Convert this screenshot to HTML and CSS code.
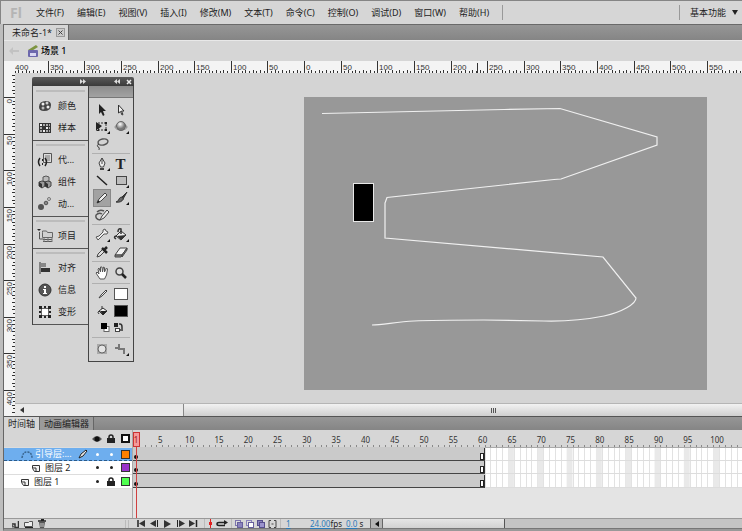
FILE: index.html
```
<!DOCTYPE html>
<html lang="zh-CN">
<head>
  <meta charset="UTF-8" />
  <meta name="viewport" content="width=device-width, initial-scale=1" />
  <title>未命名-1</title>
  <link rel="stylesheet" href="styles.css">
</head>
<body>

  <!-- Menu bar -->
  <header class="menubar">
    <span class="logo">Fl</span>
    <nav class="menus">
      <button>文件(F)</button>
      <button>编辑(E)</button>
      <button>视图(V)</button>
      <button>插入(I)</button>
      <button>修改(M)</button>
      <button>文本(T)</button>
      <button>命令(C)</button>
      <button>控制(O)</button>
      <button>调试(D)</button>
      <button>窗口(W)</button>
      <button>帮助(H)</button>
    </nav>
    <button class="layout-switch">基本功能
      <svg width="6" height="5"><path d="M0 0h6L3 5z" fill="#222"/></svg>
    </button>
  </header>

  <div class="app">
    <!-- Document tabs -->
    <div class="doc-tabs">
      <div class="doc-tab">未命名-1*
        <button class="close" aria-label="关闭"><svg width="9" height="9"><rect x=".5" y=".5" width="8" height="8" fill="#ccc" stroke="#999"/><path d="M2.5 2.5l4 4M6.5 2.5l-4 4" stroke="#444"/></svg></button>
      </div>
    </div>

    <div class="scene-bar">
      <svg class="back" width="10" height="8"><path d="M0 4l4-4v3h6v2H4v3z" fill="#c2c2c2"/></svg>
      <svg width="12" height="13"><path d="M1 5l8-5 2 2-8 5z" fill="#7d9440"/><rect x="1" y="5" width="10" height="7" rx="1" fill="#6d68ad"/><rect x="3" y="8" width="6" height="3" fill="#d9d7f2"/></svg>
      <span>场景 1</span>
    </div>

    <!-- Pasteboard with rulers -->
    <main class="workspace">
      <div class="corner"></div>
      <svg class="ruler ruler-h" id="rulerH"></svg>
      <svg class="ruler ruler-v" id="rulerV"></svg>
      <div class="pasteboard">
        <svg class="stage" width="403" height="293">
          <rect width="403" height="293" fill="#989898"/>
          <path d="M18 16.5L200 12.5 256 11.5 353 40v8L257 82 250 82.5 83 100.5 81 106v35L299 160l33 41c0 6-14 14-32 18-20 4-40 5.5-60 5l-60-1c-30 0-52 0-70 1-18 1-32 4-42 4" fill="none" stroke="#f0f0f0" stroke-width="1.2"/>
          <rect x="49.5" y="86.5" width="20" height="38" fill="#000" stroke="#e8e8e8"/>
        </svg>
      </div>
      <div class="scroll-h">
        <svg width="4" height="6"><path d="M4 0v6L0 3z" fill="#333"/></svg>
        <div class="thumb"><i></i><i></i><i></i></div>
      </div>
    </main>

    <!-- Timeline -->
    <section class="timeline">
      <div class="panel-tabs">
        <button class="active">时间轴</button>
        <button>动画编辑器</button>
      </div>
      <div class="timeline-body">
        <div class="layers">
          <div class="layer layer-head">
            <span></span>
            <svg width="10" height="8"><path d="M0 4q5-6 10 0-5 6-10 0z" fill="#555"/><circle cx="5" cy="4" r="2.5" fill="#111"/></svg>
            <svg width="8" height="9"><path d="M2 5V3q0-2 2-2t2 2v2" fill="none" stroke="#222" stroke-width="1.5"/><rect y="4" width="8" height="5" fill="#222"/></svg>
            <svg width="9" height="9"><rect x="1" y="1" width="7" height="7" fill="#fff" stroke="#111" stroke-width="2"/></svg>
          </div>
          <div class="layer selected">
            <span class="name"><svg width="12" height="9"><path d="M1 8q1-7 6-6 4 1 4 6" fill="none" stroke="#3a6690" stroke-width="1.5" stroke-dasharray="2 1"/></svg>引导层:...<svg class="pen" width="10" height="10"><path d="M1 9l2-4 5-4 1 1-4 5z" fill="#eee" stroke="#222"/></svg></span>
            <b></b><b></b><i class="orange"></i>
          </div>
          <div class="layer">
            <span class="name child"><svg width="8" height="8"><path d="M.5 1.5v3l2 3h5v-6z" fill="#f4f4f4" stroke="#333"/><path d="M1 4h3v3" fill="none" stroke="#333"/></svg>图层 2</span>
            <b></b><b></b><i class="purple"></i>
          </div>
          <div class="layer">
            <span class="name"><svg width="8" height="8"><path d="M.5 1.5v3l2 3h5v-6z" fill="#f4f4f4" stroke="#333"/><path d="M1 4h3v3" fill="none" stroke="#333"/></svg>图层 1</span>
            <b></b>
            <svg width="8" height="9"><path d="M2 5V3q0-2 2-2t2 2v2" fill="none" stroke="#222" stroke-width="1.5"/><rect y="4" width="8" height="5" fill="#222"/></svg>
            <i class="green"></i>
          </div>
        </div>
        <svg class="frames" id="frames"></svg>
      </div>

      <div class="timeline-foot">
        <div class="layer-tools">
          <button aria-label="新建图层"><svg width="8" height="8"><path d="M1 4h3v3.5h3.5V1" fill="none" stroke="#333" stroke-width="1.5"/><path d="M1 4l3 3.5H1z" fill="#555"/></svg></button>
          <button aria-label="新建文件夹"><svg width="9" height="8"><path d="M.5 6.5v-4h4l1-1h3v5z" fill="#eee" stroke="#555"/><path d="M1 7.5h8" stroke="#222"/></svg></button>
          <button aria-label="删除"><svg width="8" height="9"><path d="M0 2h8M3 .5h3" stroke="#222" stroke-width="1.5"/><path d="M1 3h6l-1 6H2z" fill="#555"/><path d="M3 4v4M5 4v4" stroke="#ccc"/></svg></button>
          <em></em>
        </div>
        <div class="play-tools">
          <button aria-label="转到第一帧"><svg width="9" height="7"><path d="M1 0v7" stroke="#222" stroke-width="1.5"/><path d="M8 0v7L2 3.5z" fill="#333"/></svg></button>
          <button aria-label="后退一帧"><svg width="9" height="7"><path d="M6 0v7L0 3.5z" fill="#333"/><path d="M7.5 0v7" stroke="#222"/></svg></button>
          <button aria-label="播放"><svg width="9" height="8"><path d="M1 0v8l7-4z" fill="#333"/></svg></button>
          <button aria-label="前进一帧"><svg width="9" height="7"><path d="M1.5 0v7" stroke="#222"/><path d="M3 0v7l6-3.5z" fill="#333"/></svg></button>
          <button aria-label="转到最后一帧"><svg width="9" height="7"><path d="M0 0v7l6-3.5z" fill="#333"/><path d="M7.5 0v7" stroke="#222" stroke-width="1.5"/></svg></button>
        </div>
        <div class="onion-tools">
          <button aria-label="帧居中"><svg width="5" height="9"><path d="M2.5 0v9" stroke="#e02020"/><path d="M1 3h3v3H1z" fill="#e02020"/></svg></button>
          <button aria-label="循环"><svg width="12" height="8"><path d="M9 5.5H3q-2 0-2-1.5t2-1.5h6" fill="none" stroke="#222" stroke-width="1.5"/><path d="M8 0l4 2.5L8 5z" fill="#222"/></svg></button>
        </div>
        <div class="onion-tools">
          <button aria-label="绘图纸外观"><svg width="8" height="8"><rect x=".5" y=".5" width="5" height="5" fill="#ddd" stroke="#7b74ad"/><rect x="2.5" y="2.5" width="5" height="5" fill="#8a83bd" stroke="#665f9c"/></svg></button>
          <button aria-label="绘图纸外观轮廓"><svg width="8" height="8"><rect x=".5" y=".5" width="5" height="5" fill="#ddd" stroke="#8a83bd"/><rect x="2.5" y="2.5" width="5" height="5" fill="#fff" stroke="#665f9c"/></svg></button>
          <button aria-label="编辑多个帧"><svg width="8" height="8"><rect x=".5" y=".5" width="5" height="5" fill="#8a83bd" stroke="#554e8c"/><rect x="2.5" y="2.5" width="5" height="5" fill="#9a93cd" stroke="#554e8c"/></svg></button>
          <button aria-label="修改标记"><svg width="9" height="8"><path d="M3 .5H1v7h2M6 .5h2v7H6" fill="none" stroke="#444"/><path d="M3.5 3.5h2v1h-2z" fill="#444"/></svg></button>
        </div>
        <div class="stats">
          <a href="#">1</a>
          <span><a href="#">24.00</a>fps</span>
          <span><a href="#">0.0</a> s</span>
        </div>
        <div class="frame-scroll">
          <button aria-label="向左"><svg width="4" height="6"><path d="M4 0v6L0 3z" fill="#111"/></svg></button>
          <div class="thumb"></div>
        </div>
      </div>
    </section>
  </div>

  <!-- Floating panels -->
  <div class="palettes">
    <div class="palette-bar">
      <svg width="6" height="5"><path d="M0 0l3 2.5L0 5zM3 0l3 2.5L3 5z" fill="#ddd"/></svg>
      <svg width="6" height="5"><path d="M3 0v5L0 2.5zM6 0v5L3 2.5z" fill="#ddd"/></svg>
      <svg width="6" height="6"><path d="M1 1l4 4M5 1L1 5" stroke="#eee" stroke-width="1.5"/></svg>
    </div>
    <div class="palette-row">
      <div class="icon-panels">
        <div class="group">
          <button><svg width="14" height="14"><path d="M1 8q0-6 7-6 5 0 5 4 0 6-7 6-5 0-5-4z" fill="#444"/><circle cx="5" cy="5" r="1.5" fill="#eee"/><circle cx="9" cy="4" r="1.5" fill="#ccc"/><circle cx="10" cy="8" r="1.5" fill="#eee"/><circle cx="5" cy="9" r="1.5" fill="#bbb"/></svg>颜色</button>
          <button><svg width="14" height="14"><path d="M1 2h12v10H1z" fill="#333"/><path d="M2 3h2v2H2zM8 6h2v2H8zM5 9h2v2H5z" fill="#eee"/><path d="M5 3h2v2H5zM8 3h2v2H8zM11 3h1v2h-1zM2 6h2v2H2zM11 6h1v2h-1zM2 9h2v2H2zM8 9h2v2H8zM11 9h1v2h-1z" fill="#aaa"/></svg>样本</button>
        </div>
        <div class="group">
          <button><svg width="14" height="14"><path d="M5.5.5h8v9h-8z" fill="#ddd" stroke="#555"/><path d="M7 3h5M7 5h5M7 7h5" stroke="#777"/><path d="M2 5Q-1 9 2 13M7 5q3 4 0 8" fill="none" stroke="#222" stroke-width="1.5"/><path d="M4.5 6v2M4.5 10v2" stroke="#222"/></svg>代...</button>
          <button><svg width="14" height="14"><path d="M5 2l3-1 3 1v4L8 7 5 6z" fill="#bbb" stroke="#555"/><path d="M1 7l3-1 3 1v4l-3 2-3-2zM7 7l3-1 3 1v4l-3 2-3-2z" fill="#999" stroke="#444"/><path d="M1 7l3 2v4l-3-2zM7 7l3 2v4l-3-2z" fill="#333"/></svg>组件</button>
          <button><svg width="14" height="14"><circle cx="3" cy="10" r="3" fill="#555"/><circle cx="8" cy="6" r="1.8" fill="#888" stroke="#555"/><circle cx="11" cy="2" r="1.5" fill="#ccc" stroke="#777"/></svg>动...</button>
        </div>
        <div class="group">
          <button><svg width="16" height="14"><path d="M-1 0h4L1 2z" fill="#222"/><path d="M4.5 3.5V2h4l1 1.5h5v5h-10z" fill="#d0d0d0" stroke="#666"/><path d="M1.5 3v7H5M5 10.5h9M5 12.5h9" fill="none" stroke="#555"/><path d="M6 9v4M10 9v4M14 9v4" stroke="#777"/></svg>项目</button>
        </div>
        <div class="group">
          <button><svg width="14" height="14"><path d="M2 1v12" stroke="#333"/><path d="M3 2h5v4H3z" fill="#888"/><path d="M3 7h9v4H3z" fill="#333"/></svg>对齐</button>
          <button><svg width="14" height="14"><circle cx="7" cy="7" r="6" fill="#555" stroke="#333"/><path d="M6 3h2v2H6zM5 6h3v4h1v1H5v-1h1V7H5z" fill="#fff"/></svg>信息</button>
          <button><svg width="14" height="14"><rect x="3.5" y="3.5" width="7" height="7" fill="#fff" stroke="#666"/><path d="M1 1h3v3H1zM6 1h2v2H6zM10 1h3v3h-3zM1 6h2v2H1zM11 6h2v2h-2zM1 10h3v3H1zM6 11h2v2H6zM10 10h3v3h-3z" fill="#222"/></svg>变形</button>
        </div>
      </div>

      <div class="tools">
        <div class="tools-head"></div>
        <div class="group">
          <button aria-label="选择"><svg width="16" height="16"><path d="M5 2v10l2-2 2 4 1.5-1L9 9h3z" fill="#222"/></svg></button>
          <button aria-label="部分选取"><svg width="16" height="16"><path d="M5.5 3v8l2-1.5L9 13l1-.5L8.5 9H11z" fill="#f2f2f2" stroke="#333"/></svg></button>
          <button aria-label="任意变形"><svg width="16" height="16"><rect x="4" y="4" width="8" height="7" fill="none" stroke="#333" stroke-dasharray="2 1"/><path d="M2 3v9l6-5zM11 3h2v2h-2zM11 10h2v2h-2zM3 10h2v2H3z" fill="#222"/><path d="M16 12v3h-3z" fill="#111"/></svg></button>
          <button aria-label="3D旋转"><svg width="16" height="16"><ellipse cx="8" cy="8" rx="6" ry="3" fill="none" stroke="#888"/><circle cx="8" cy="7" r="4.5" fill="url(#ball)" stroke="#666"/><path d="M16 12v3h-3z" fill="#111"/></svg></button>
          <button aria-label="套索"><svg width="16" height="16"><ellipse cx="9" cy="6" rx="5" ry="3" fill="none" stroke="#555" stroke-width="1.5" transform="rotate(-12 9 6)"/><path d="M5 8q-3 1-1 3 2 0 1 3" fill="none" stroke="#444"/></svg></button>
        </div>
        <div class="group">
          <button aria-label="钢笔"><svg width="16" height="16"><path d="M8 2l3 5-1.5 4h-3L5 7z" fill="#eee" stroke="#444"/><path d="M8 2v6" stroke="#444"/><path d="M6 12h4v2H6z" fill="#444"/><path d="M16 12v3h-3z" fill="#111"/></svg></button>
          <button aria-label="文本" class="type">T</button>
          <button aria-label="线条"><svg width="16" height="16"><path d="M3 3l10 9" stroke="#222" stroke-width="1.5"/></svg></button>
          <button aria-label="矩形"><svg width="16" height="16"><rect x="3.5" y="3.5" width="10" height="8" fill="#bdbdbd" stroke="#444"/><path d="M16 12v3h-3z" fill="#111"/></svg></button>
          <button aria-label="铅笔" class="on"><svg width="16" height="16"><path d="M3 13l2-4 6-6 2 2-6 6z" fill="#eee" stroke="#444"/><path d="M3 13l3-1-2-2z" fill="#222"/></svg></button>
          <button aria-label="刷子"><svg width="16" height="16"><path d="M14 2L9 7l1 2z" fill="#333" stroke="#333"/><path d="M9 7l1.5 2Q8 13 3 12q3-1 3-3 1-2 3-2z" fill="#666" stroke="#333"/><path d="M16 12v3h-3z" fill="#111"/></svg></button>
          <button aria-label="Deco"><svg width="16" height="16"><path d="M6 13l2-4 5-6 2 2-5 6z" fill="#eee" stroke="#444"/><path d="M3 5q3-3 7-1M2 8q3-3 6-1M6 13Q1 12 2 8" fill="none" stroke="#555" stroke-width="1.5"/></svg></button>
        </div>
        <div class="group">
          <button aria-label="骨骼"><svg width="16" height="16"><path d="M4 13l-2-3 3-1 4-4 0-2 2-1 1 2 2 1-1 2-3 0-4 4z" fill="#eee" stroke="#555"/><path d="M16 12v3h-3z" fill="#111"/></svg></button>
          <button aria-label="颜料桶"><svg width="16" height="16"><path d="M3 9l5-5 5 4-5 5z" fill="#eee" stroke="#333"/><path d="M8 7V2q-3-1-3 3M3 9Q0 10 3 12" fill="none" stroke="#333" stroke-width="1.5"/><path d="M4 9l9-1-5 5z" fill="#333"/><path d="M16 12v3h-3z" fill="#111"/></svg></button>
          <button aria-label="滴管"><svg width="16" height="16"><path d="M3 13l1-3 5-5 2 2-5 5z" fill="#ddd" stroke="#444"/><path d="M8 4l5 5M10 6l3-3" stroke="#222" stroke-width="2.5"/></svg></button>
          <button aria-label="橡皮擦"><svg width="16" height="16"><path d="M2 11l5-7h7l-5 7z" fill="#f2f2f2" stroke="#444"/><path d="M2 11h7l-1 2H2zM9 11l5-7v2l-5 7z" fill="#888" stroke="#444"/></svg></button>
        </div>
        <div class="group roomy">
          <button aria-label="手形"><svg width="16" height="16"><path d="M6 14L2 8l1-1 2 2-1-5 1-1 1.5 4V2H8l.5 5 1-5 1 .5V7l2-4 1 1-1 6-2 4z" fill="#fff" stroke="#555"/></svg></button>
          <button aria-label="缩放"><svg width="16" height="16"><circle cx="6.5" cy="6.5" r="3.5" fill="#ddd" stroke="#444" stroke-width="1.5"/><path d="M9 9l4 4" stroke="#222" stroke-width="2.5"/></svg></button>
        </div>
        <div class="group colors">
          <svg width="16" height="16"><path d="M5 12l2-3 5-5 1 1-5 5z" fill="#eee" stroke="#444"/></svg>
          <button aria-label="笔触颜色" class="swatch white"></button>
          <svg width="16" height="16"><path d="M5 8l4-3 4 3-4 4z" fill="#eee" stroke="#333"/><path d="M6 8l7 0-4 4z" fill="#222"/><path d="M8 6V3M5 8q-2 1 0 3" fill="none" stroke="#333"/></svg>
          <button aria-label="填充颜色" class="swatch black"></button>
          <button aria-label="黑白"><svg width="16" height="16"><rect x="10" y="6.5" width="5" height="5" fill="#fff" stroke="#666"/><rect x="7" y="3" width="6" height="6" fill="#000"/></svg></button>
          <button aria-label="交换颜色"><svg width="16" height="16"><path d="M1 3h4v4H1z" fill="#222"/><rect x="2.5" y="8.5" width="4" height="3" fill="#fff" stroke="#444"/><path d="M6 4h1q2 0 2 3v2M7 10h3" fill="none" stroke="#333" stroke-width="1.5"/></svg></button>
        </div>
        <div class="group roomy">
          <button aria-label="对象绘制"><svg width="16" height="16"><rect x="3" y="3" width="10" height="10" fill="#aaa"/><circle cx="8" cy="8" r="4" fill="#e4e4e4" stroke="#666"/></svg></button>
          <button aria-label="铅笔模式"><svg width="16" height="16"><path d="M2 7h4M6 3v5h5v5" fill="none" stroke="#777" stroke-width="2"/><path d="M16 12v3h-3z" fill="#111"/></svg></button>
        </div>
      </div>
    </div>
    <svg width="0" height="0" class="defs"><defs><radialGradient id="ball" cx=".4" cy=".3"><stop offset="0" stop-color="#fff"/><stop offset="1" stop-color="#777"/></radialGradient></defs></svg>
  </div>

  <script>
    const NS = "http://www.w3.org/2000/svg";

    function add(parent, tag, attrs, text) {
      const el = document.createElementNS(NS, tag);
      for (const key in attrs) el.setAttribute(key, attrs[key]);
      if (text !== undefined) el.textContent = text;
      parent.appendChild(el);
      return el;
    }

    // Rulers: one label per 50 units, a tick every 5
    const unit = 0.7325;

    function drawRuler(svg, origin, from, vertical) {
      const box = svg.getBoundingClientRect();
      const size = vertical ? box.height : box.width;
      for (let n = from; origin + n * unit < size; n += 5) {
        const p = Math.round(origin + n * unit);
        const len = n % 50 === 0 ? 12 : n % 10 === 0 ? 3 : 2;
        if (vertical) {
          add(svg, "rect", { x: 11 - len, y: p, width: len, height: 1 });
        } else {
          add(svg, "rect", { x: p, y: 12 - len, width: 1, height: len });
        }
        if (n % 50 === 0 && p + 15 < size) {
          const label = Math.abs(n);
          if (vertical) {
            add(svg, "text", { transform: `translate(8 ${p + 2}) rotate(-90)`, "text-anchor": "end" }, label);
          } else {
            add(svg, "text", { x: Math.max(p + 2, 0), y: 9 }, label);
          }
        }
      }
    }

    drawRuler(document.getElementById("rulerH"), 289, -400, false);
    drawRuler(document.getElementById("rulerV"), 24, -30, true);
    add(document.getElementById("rulerH"), "rect", { x: 462, y: 2, width: 1, height: 10 });

    // Timeline frames
    const frames = document.getElementById("frames");
    const fw = 5.86;
    const head = 18;
    const rowTops = [18, 31, 45];
    const total = Math.ceil(frames.getBoundingClientRect().width / fw);
    const last = 60;

    add(frames, "rect", { x: 0, y: head, width: "100%", height: 40, fill: "#fff" });
    for (let n = 1; n <= total; n++) {
      const x = (n - 1) * fw;
      if (n % 5 === 0) {
        add(frames, "rect", { x: x, y: head, width: fw, height: 40, fill: "#e9e9e9" });
        if (n < total - 2) {
          add(frames, "text", { x: x + fw / 2 + 1, y: 13, "text-anchor": "middle" }, n);
        }
      }
      add(frames, "rect", { x: Math.round(x + fw), y: head, width: 1, height: 40, fill: "#e2e2e2" });
      add(frames, "rect", { x: Math.round(x + fw), y: head - 3, width: 1, height: 2, fill: "#888" });
    }
    add(frames, "rect", { x: 0, y: head - 1, width: "100%", height: 1, fill: "#aaa" });
    rowTops.forEach(y => {
      const w = Math.round(last * fw);
      add(frames, "rect", { x: 0, y: y + 12, width: "100%", height: 1, fill: "#ddd" });
      add(frames, "rect", { x: 0, y: y - 1, width: w, height: 14, fill: "#cacaca" });
      add(frames, "rect", { x: 0, y: y + 12, width: w, height: 1, fill: "#444" });
      add(frames, "rect", { x: w - 1, y: y, width: 1, height: 13, fill: "#333" });
      add(frames, "rect", { x: w - 4.5, y: y + 5.5, width: 3, height: 6, fill: "#fff", stroke: "#222" });
      add(frames, "circle", { cx: 3, cy: y + 9, r: 2, fill: "#111" });
    });
    [30, 43].forEach(y => {
      add(frames, "rect", { x: 0, y: y, width: Math.round(last * fw), height: 1, fill: "#444" });
    });

    // Playhead
    add(frames, "rect", { x: 0.5, y: 2.5, width: 6, height: 14, fill: "#f59a9a", stroke: "#c33" });
    add(frames, "rect", { x: 3, y: 17, width: 1, height: 71, fill: "#d04040" });
    add(frames, "text", { x: 3, y: 13, "text-anchor": "middle", class: "now" }, 1);
  </script>
</body>
</html>
```
FILE: styles.css
```
* {
  box-sizing: border-box;
}

body {
  margin: 0;
  min-height: 100vh;
  display: flex;
  flex-direction: column;
  position: relative;
  overflow: hidden;
  background: #bdbdbd;
  font-family: "Noto Sans", "Noto Sans CJK SC", sans-serif;
  font-size: 9px;
  line-height: 12px;
  color: #222;
}

button {
  margin: 0;
  padding: 0;
  border: none;
  background: none;
  font: inherit;
  color: inherit;
  white-space: nowrap;
}

svg {
  display: block;
  flex: none;
}

/* Menu bar */
.menubar {
  height: 24px;
  display: flex;
  align-items: center;
  background: #d6d6d6;
  border-top: 1px solid #858585;
  border-left: 1px solid #858585;
}

.logo {
  width: 35px;
  padding-left: 9px;
  font-size: 14px;
  font-weight: bold;
  color: #b4b4b4;
}

.menus {
  display: flex;
  gap: 13px;
  flex: 1;
}

.menus::after {
  content: "";
  width: 1px;
  height: 15px;
  background: #999;
}

.layout-switch {
  display: flex;
  align-items: center;
  gap: 6px;
  height: 15px;
  padding: 0 4px 0 10px;
  border-left: 1px solid #999;
}

.app {
  flex: 1;
  display: flex;
  flex-direction: column;
  margin-left: 3px;
  border-left: 1px solid #666;
  border-bottom: 2px solid #999;
  background: #d6d6d6;
}

/* Document tabs */
.doc-tabs {
  height: 16px;
  display: flex;
  background: linear-gradient(#969696, #858585);
  border-top: 1px solid #6a6a6a;
}

.doc-tab {
  display: flex;
  align-items: center;
  gap: 4px;
  padding: 0 3px 0 8px;
  background: #d6d6d6;
  border-right: 1px solid #666;
}

.scene-bar {
  height: 21px;
  display: flex;
  align-items: center;
  padding-left: 5px;
  gap: 2px;
  border-top: 1px solid #e8e8e8;
  color: #000;
  font-weight: 500;
}

.scene-bar .back {
  margin-right: 6px;
}

/* Rulers and pasteboard */
.workspace {
  flex: 1;
  display: grid;
  grid-template-columns: 11px 1fr;
  grid-template-rows: 12px 1fr 13px;
  min-height: 0;
}

.corner {
  background: #f4f4f4;
}

.ruler {
  width: 100%;
  height: 100%;
  background: #f4f4f4;
  overflow: hidden;
  fill: #333;
  font-family: "Liberation Sans", sans-serif;
  font-size: 8px;
}

.ruler-v {
  grid-row: 2 / 4;
  height: 0;
  min-height: 100%;
}

.pasteboard {
  padding: 24px 0 0 289px;
  background: #d4d4d4;
  overflow: hidden;
}

.scroll-h {
  display: flex;
  align-items: center;
  padding-left: 5px;
  background: #e9e9e9;
  border-top: 1px solid #b5b5b5;
  overflow: hidden;
}

.scroll-h .thumb {
  flex: none;
  width: 86%;
  height: 100%;
  margin-left: 22%;
  display: flex;
  align-items: center;
  justify-content: center;
  gap: 1px;
  background: linear-gradient(#f2f2f2, #cfcfcf);
  border-left: 1px solid #888;
}

.scroll-h i {
  width: 1px;
  height: 5px;
  background: #555;
}

/* Timeline */
.panel-tabs {
  height: 14px;
  display: flex;
  background: linear-gradient(#969696, #858585);
  border-top: 1px solid #555;
}

.panel-tabs button {
  padding: 0 4px;
  background: #9a9a9a;
  border-right: 1px solid #666;
}

.panel-tabs .active {
  background: #d6d6d6;
}

.timeline-body {
  display: flex;
  height: 88px;
  background: #e4e4e4;
}

.layers {
  width: 129px;
  border-right: 1px solid #aaa;
}

.layer {
  height: 14px;
  display: grid;
  grid-template-columns: 1fr 14px 14px 14px;
  align-items: center;
  justify-items: center;
  background: #fff;
  border-bottom: 1px solid #ddd;
}

.layer-head {
  height: 18px;
  background: #d6d6d6;
}

.layer.selected {
  height: 13px;
  background: #6eaeee;
  color: #fff;
  border-bottom: 1px dashed #2a5a8a;
}

.name {
  justify-self: stretch;
  display: flex;
  align-items: center;
  gap: 5px;
  padding-left: 17px;
}

.name.child {
  padding-left: 28px;
}

.selected .name {
  gap: 2px;
}

.pen {
  margin-left: 4px;
}

.layer b {
  width: 3px;
  height: 3px;
  border-radius: 2px;
  background: #222;
}

.selected b {
  background: #fff;
}

.layer i {
  width: 9px;
  height: 9px;
  border: 1px solid #333;
}

.orange {
  background: #ff8000;
}

.purple {
  background: #9933cc;
}

.green {
  background: #4fff4f;
}

.frames {
  flex: 1;
  width: 0;
  height: 88px;
  background: linear-gradient(#d6d6d6 18px, #e4e4e4 18px);
  overflow: hidden;
  fill: #333;
  font-family: "Noto Sans", sans-serif;
  font-size: 8px;
}

.frames .now {
  fill: #a01818;
}

.timeline-foot {
  display: flex;
  align-items: stretch;
  height: 11px;
  border-top: 1px solid #999;
  border-bottom: 1px solid #777;
  background: #d6d6d6;
  line-height: 9px;
}

.layer-tools {
  width: 129px;
  display: flex;
  align-items: center;
  gap: 5px;
  padding-left: 7px;
}

.layer-tools em {
  width: 4px;
  height: 8px;
  margin-left: auto;
  margin-right: 4px;
  border-left: 1px solid #bbb;
  border-right: 1px solid #bbb;
}

.play-tools {
  display: flex;
  align-items: center;
  gap: 4px;
  padding: 0 6px 0 4px;
  border-right: 1px solid #bbb;
}

.onion-tools {
  display: flex;
  align-items: center;
  gap: 3px;
  padding: 0 3px;
  border-right: 1px solid #bbb;
}

.stats {
  width: 89px;
  display: flex;
  padding-left: 5px;
  font-size: 8px;
}

.stats > a {
  width: 24px;
  flex: none;
}

.stats span {
  width: 36px;
  flex: none;
  white-space: nowrap;
}

.stats a {
  color: #2a7ab8;
}

.frame-scroll {
  flex: 1;
  display: flex;
  background: #c4c4c4;
  border-left: 1px solid #666;
}

.frame-scroll button {
  width: 12px;
  display: flex;
  align-items: center;
  justify-content: center;
  background: #b5b5b5;
  border-right: 1px solid #666;
}

.frame-scroll .thumb {
  width: 33%;
  background: linear-gradient(#e6e6e6, #d2d2d2);
  border-right: 1px solid #555;
}

/* Floating panels */
.palettes {
  position: absolute;
  left: 32px;
  top: 77px;
  width: 102px;
}

.palette-bar {
  height: 9px;
  display: flex;
  align-items: center;
  justify-content: flex-end;
  gap: 6px;
  padding-right: 2px;
  background: linear-gradient(#5a5a5a, #3a3a3a);
  border-radius: 2px 2px 0 0;
}

.palette-bar svg:first-child {
  margin-right: 22px;
}

.palette-row {
  display: flex;
  align-items: flex-start;
}

.icon-panels {
  width: 56px;
  padding-top: 1px;
  background: #d4d4d4;
  border-left: 1px solid #444;
}

.icon-panels .group {
  padding: 8px 0 1px;
  border-bottom: 1px solid #555;
  background: linear-gradient(#bcbcbc, #bcbcbc) 3px 3px / 49px 2px no-repeat;
}

.icon-panels button {
  height: 22px;
  display: flex;
  align-items: center;
  gap: 6px;
  padding-left: 5px;
}

.icon-panels button svg {
  width: 14px;
  overflow: visible;
}

.tools {
  width: 46px;
  padding-bottom: 2px;
  background: #d4d4d4;
  border: 1px solid #444;
  border-top: none;
}

.tools-head {
  height: 12px;
  background: linear-gradient(#8c8c8c, #a2a2a2);
  border-bottom: 1px solid #777;
}

.tools .group {
  display: grid;
  grid-template-columns: 19px 19px;
  grid-auto-rows: 17px;
  justify-content: center;
  justify-items: center;
  align-items: center;
  margin: 0 3px;
  padding: 1px 0;
  border-bottom: 1px solid #b0b0b0;
}

.tools .tools-head + .group {
  padding-top: 3px;
}

.tools .roomy {
  padding: 2px 0;
}

.tools .group:last-child {
  border-bottom: none;
}

.type {
  font-family: "Liberation Serif", serif;
  font-size: 15px;
  font-weight: bold;
}

.tools .on {
  background: #a2a2a2;
  outline: 1px solid #888;
}

.swatch {
  width: 14px;
  height: 12px;
}

.tools .white {
  background: #fff;
  border: 1px solid #555;
}

.tools .black {
  background: #000;
  border: 1px solid #555;
}

.defs {
  position: absolute;
}
```
